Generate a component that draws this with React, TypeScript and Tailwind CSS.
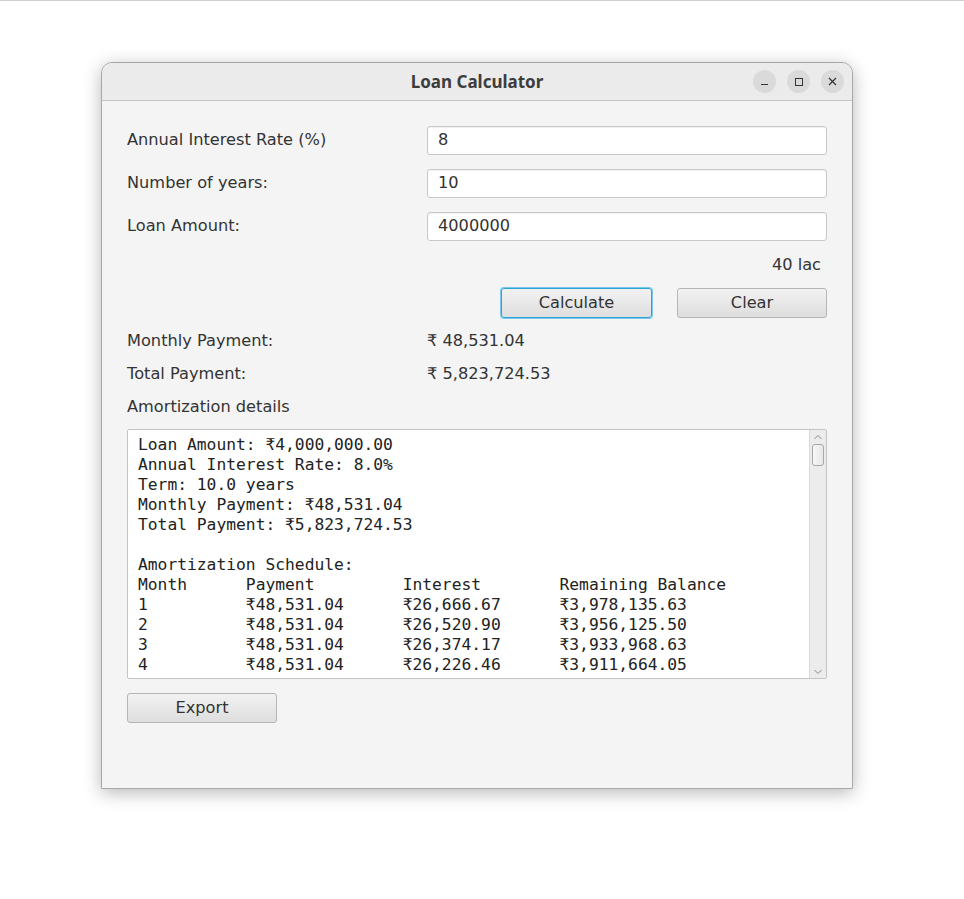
import React from "react";

const sans = { fontFamily: '"DejaVu Sans", "Verdana", sans-serif' };
const mono = { fontFamily: '"DejaVu Sans Mono", monospace' };

function Field({ label, value }: { label: string; value: string }) {
  return (
    <div className="flex items-center h-[29px]">
      <div className="w-[300px] text-[16.2px] text-[#333]" style={sans}>{label}</div>
      <div className="flex-1 h-[29px] bg-white border border-[#c8c8c8] rounded-[3px] flex items-center px-[10px] text-[16.2px] text-[#333] shadow-[inset_0_1px_1px_rgba(0,0,0,0.06)]" style={sans}>
        {value}
      </div>
    </div>
  );
}

function Btn({ children, focused, w }: { children: React.ReactNode; focused?: boolean; w: string }) {
  return (
    <div
      style={sans}
      className={`${w} h-[30px] flex items-center justify-center rounded-[3px] text-[16.2px] text-[#333] bg-gradient-to-b from-[#f2f2f2] to-[#dedede] ${
        focused ? "border border-[#2ba3d8] shadow-[0_0_0_1px_#7cc8eb]" : "border border-[#b5b5b5]"
      }`}
    >
      {children}
    </div>
  );
}

const text = `Loan Amount: ₹4,000,000.00
Annual Interest Rate: 8.0%
Term: 10.0 years
Monthly Payment: ₹48,531.04
Total Payment: ₹5,823,724.53

Amortization Schedule:
Month      Payment         Interest        Remaining Balance
1          ₹48,531.04      ₹26,666.67      ₹3,978,135.63
2          ₹48,531.04      ₹26,520.90      ₹3,956,125.50
3          ₹48,531.04      ₹26,374.17      ₹3,933,968.63
4          ₹48,531.04      ₹26,226.46      ₹3,911,664.05`;

export default function App() {
  return (
    <div className="w-[964px] h-[899px] bg-white border-t border-[#cfcfcf] relative overflow-hidden" style={sans}>
      <div className="pt-[61px] pl-[101px]">
        <div className="w-[752px] h-[727px] bg-[#f4f4f4] rounded-t-[11px] border border-[#a8a8a8] shadow-[0_4px_18px_rgba(0,0,0,0.28)] flex flex-col overflow-hidden">
          <div className="h-[38px] bg-[#ebebeb] border-b border-[#c4c4c4] relative flex items-center justify-center shrink-0">
            <div className="text-[17px] font-bold text-[#3d3d3d]" style={{ fontFamily: '"Noto Sans", sans-serif' }}>
              Loan Calculator
            </div>
            <div className="absolute right-[8px] top-[7px] flex gap-[11px]">
              <div className="w-[23px] h-[23px] rounded-full bg-[#dadada] flex items-center justify-center">
                <div className="w-[7px] h-[1px] bg-[#333] mt-[5px]" />
              </div>
              <div className="w-[23px] h-[23px] rounded-full bg-[#dadada] flex items-center justify-center">
                <div className="w-[8px] h-[8px] border border-[#333]" />
              </div>
              <div className="w-[23px] h-[23px] rounded-full bg-[#dadada] flex items-center justify-center">
                <svg width="9" height="9" viewBox="0 0 9 9">
                  <path d="M1 1L8 8M8 1L1 8" stroke="#333" strokeWidth="1.2" />
                </svg>
              </div>
            </div>
          </div>
          <div className="px-[25px] pt-[25px] flex flex-col">
            <div className="flex flex-col gap-[14px]">
              <Field label="Annual Interest Rate (%)" value="8" />
              <Field label="Number of years:" value="10" />
              <Field label="Loan Amount:" value="4000000" />
            </div>
            <div className="flex justify-end pr-[6px] mt-[14px] h-[20px] items-center text-[16.2px] text-[#333]">40 lac</div>
            <div className="flex justify-end gap-[25px] mt-[13px]">
              <Btn focused w="w-[151px]">Calculate</Btn>
              <Btn w="w-[150px]">Clear</Btn>
            </div>
            <div className="flex flex-col text-[16.2px] text-[#333] mt-[12px]">
              <div className="flex h-[22px] items-center">
                <div className="w-[300px]">Monthly Payment:</div>
                <div>₹ 48,531.04</div>
              </div>
              <div className="flex h-[22px] items-center mt-[11px]">
                <div className="w-[300px]">Total Payment:</div>
                <div>₹ 5,823,724.53</div>
              </div>
              <div className="flex h-[22px] items-center mt-[11px]">Amortization details</div>
            </div>
            <div className="mt-[11px] h-[250px] bg-white border border-[#c4c4c4] rounded-[2px] flex">
              <div
                className="flex-1 pl-[10px] pt-[5px] text-[16.3px] leading-[20px] text-[#222] whitespace-pre overflow-hidden"
                style={mono}
              >
                {text}
              </div>
              <div className="w-[17px] bg-[#ececec] border-l border-[#dadada] flex flex-col items-center">
                <svg width="10" height="8" viewBox="0 0 10 8" className="mt-[3px]">
                  <path d="M1.5 6L5 2.5L8.5 6" stroke="#8a8a8a" strokeWidth="1" fill="none" />
                </svg>
                <div className="w-[12px] h-[22px] mt-[3px] rounded-[3px] border border-[#a8a8a8] bg-gradient-to-r from-[#f8f8f8] to-[#e6e6e6]" />
                <div className="flex-1" />
                <svg width="10" height="8" viewBox="0 0 10 8" className="mb-[2px]">
                  <path d="M1.5 2L5 5.5L8.5 2" stroke="#8a8a8a" strokeWidth="1" fill="none" />
                </svg>
              </div>
            </div>
            <div className="mt-[14px]">
              <Btn w="w-[150px]">Export</Btn>
            </div>
          </div>
        </div>
      </div>
    </div>
  );
}
